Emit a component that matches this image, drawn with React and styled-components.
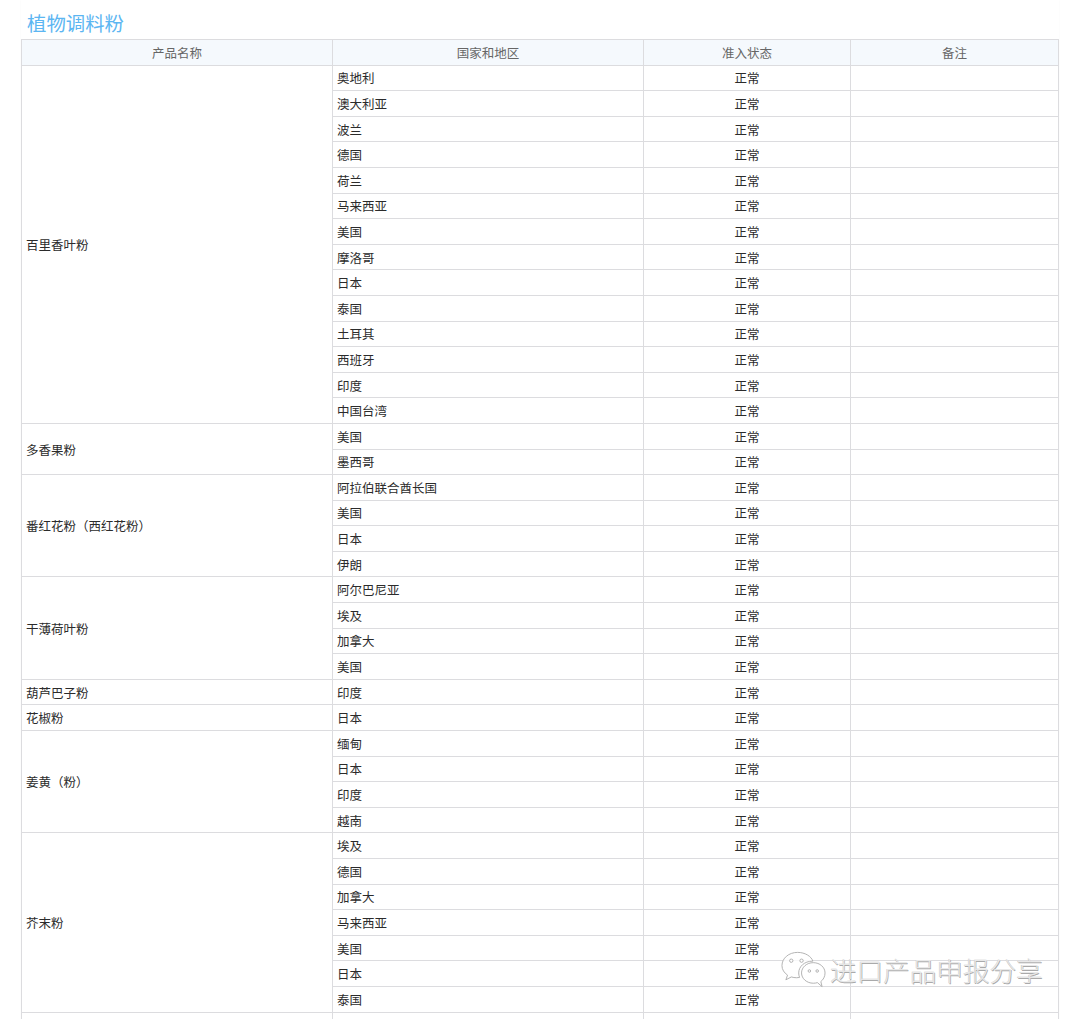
import React from 'react';
import styled, { createGlobalStyle } from 'styled-components';

const GlobalStyle = createGlobalStyle`
  html, body {
    margin: 0;
    height: 1019px;
    overflow: hidden;
    background: #fff;
  }
`;

const Page = styled.div`
  position: relative;
  height: 1019px;
  overflow: hidden;
  padding: 0 21px;
  font-family: "Noto Sans CJK SC", "Liberation Sans", sans-serif;
  color: #333;
`;

const Sheet = styled.div`
  background: #fff;
  box-shadow: 0 0 2px rgba(0, 0, 0, 0.03);
`;

const Title = styled.h2`
  margin: 0;
  height: 39px;
  padding: 8px 0 0 6px;
  box-sizing: border-box;
  font-size: 19.4px;
  line-height: 30px;
  font-weight: 400;
  color: #5cb6f2;
`;

const Table = styled.table`
  width: 1038px;
  table-layout: fixed;
  border-collapse: collapse;
  font-size: 12.5px;
`;

const HeadCell = styled.th`
  height: 24.6px;
  padding: 0;
  font-weight: 400;
  color: #666;
  background: #f5f9fd;
  border: 1px solid #dcdcdf;
  text-align: center;
`;

const Cell = styled.td`
  height: 23.6px;
  padding: 1px 4px 0;
  line-height: 16px;
  color: #2b2b2b;
  border: 1px solid #dcdcdf;
  text-align: ${props => (props.$center ? 'center' : 'left')};
`;

const Watermark = styled.div`
  position: absolute;
  left: 780px;
  top: 951px;
  display: flex;
  align-items: center;
  gap: 3px;
  font-size: 26.6px;
  line-height: 38px;
  font-weight: 300;
  color: rgba(255, 255, 255, 0.7);
  text-shadow: 0.6px 0.6px 0 #aaa, -0.3px -0.3px 0 #bbb;
`;

const groups = [
  ['百里香叶粉', ['奥地利', '澳大利亚', '波兰', '德国', '荷兰', '马来西亚', '美国', '摩洛哥', '日本', '泰国', '土耳其', '西班牙', '印度', '中国台湾']],
  ['多香果粉', ['美国', '墨西哥']],
  ['番红花粉（西红花粉）', ['阿拉伯联合酋长国', '美国', '日本', '伊朗']],
  ['干薄荷叶粉', ['阿尔巴尼亚', '埃及', '加拿大', '美国']],
  ['葫芦巴子粉', ['印度']],
  ['花椒粉', ['日本']],
  ['姜黄（粉）', ['缅甸', '日本', '印度', '越南']],
  ['芥末粉', ['埃及', '德国', '加拿大', '马来西亚', '美国', '日本', '泰国']],
];

function WechatMark() {
  return (
    <svg width="47" height="38" viewBox="0 0 48 38" fill="rgba(255,255,255,0.8)" stroke="#aaa" strokeWidth="0.9">
      <path d="M18 1C9 1 2 7 2 14.500c0 4 2.200 7.400 5.700 9.700L6 29l5.600-2.900c1.700.5 3.500.8 5.400.8 1 0 2-.1 3-.3-.6-1.500-.9-3-.9-4.600 0-6.700 6.200-12 13.700-12h.8C32 5 25.500 1 18 1z" />
      <path d="M46 22c0-5.800-5.300-10.500-12-10.500S22 16.200 22 22s5.300 10.500 12 10.500c1.500 0 2.900-.2 4.200-.6L43 36l-1.300-5.200C44.300 28.800 46 25.600 46 22z" />
      <circle cx="11.500" cy="9.500" r="1.700" />
      <circle cx="22" cy="9.500" r="1.700" />
      <circle cx="30" cy="20" r="1.300" />
      <circle cx="38" cy="20" r="1.300" />
    </svg>
  );
}

function App() {
  return (
    <Page>
      <GlobalStyle />
      <Sheet>
        <Title>植物调料粉</Title>
        <Table>
          <colgroup>
            <col style={{ width: 311 }} />
            <col style={{ width: 311 }} />
            <col style={{ width: 207 }} />
            <col style={{ width: 208 }} />
          </colgroup>
          <thead>
            <tr>
              <HeadCell>产品名称</HeadCell>
              <HeadCell>国家和地区</HeadCell>
              <HeadCell>准入状态</HeadCell>
              <HeadCell>备注</HeadCell>
            </tr>
          </thead>
          <tbody>
            {groups.map(([name, countries]) =>
              countries.map((country, i) => (
                <tr key={name + country}>
                  {i === 0 && <Cell rowSpan={countries.length}>{name}</Cell>}
                  <Cell>{country}</Cell>
                  <Cell $center>正常</Cell>
                  <Cell />
                </tr>
              ))
            )}
            <tr>
              <Cell />
              <Cell />
              <Cell />
              <Cell />
            </tr>
          </tbody>
        </Table>
      </Sheet>
      <Watermark>
        <WechatMark />
        <span>进口产品申报分享</span>
      </Watermark>
    </Page>
  );
}

export default App;
